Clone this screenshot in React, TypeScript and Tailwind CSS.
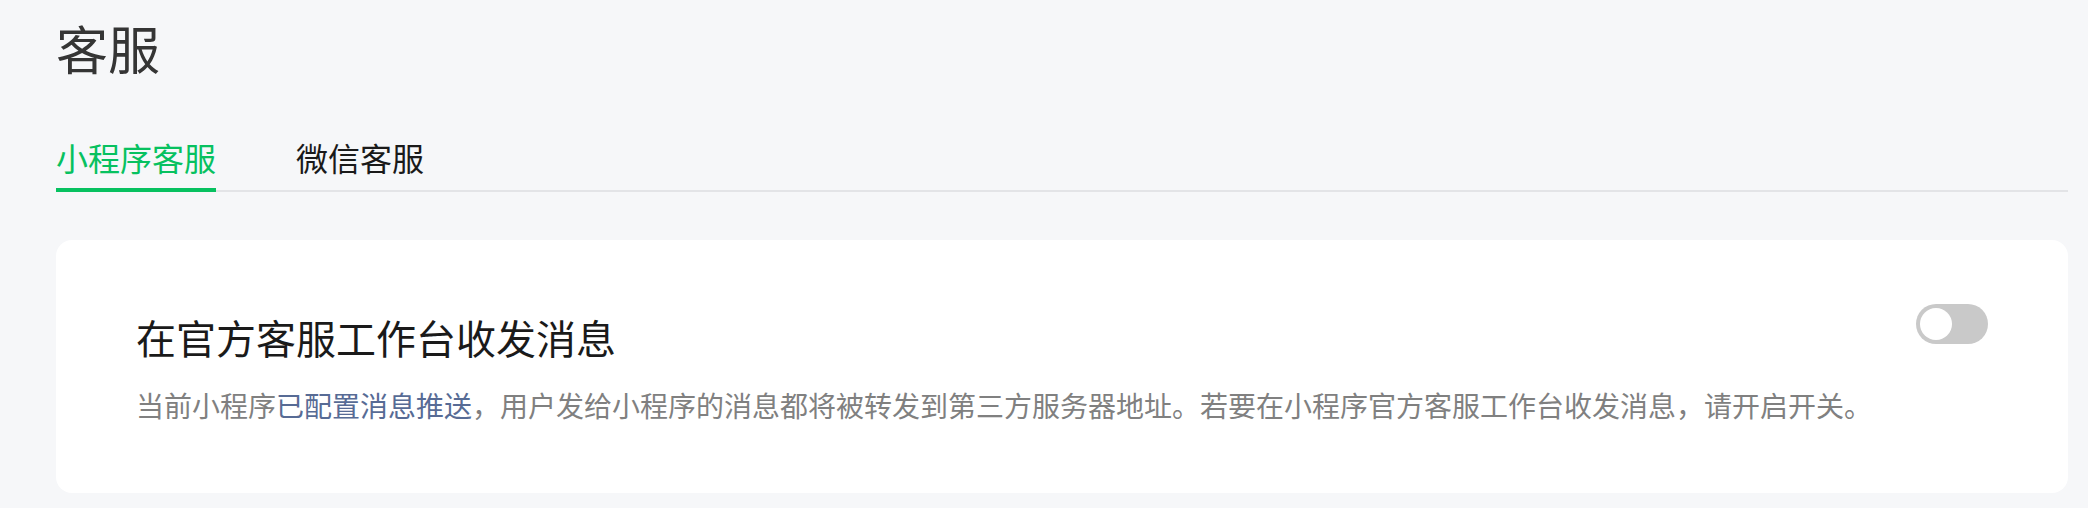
import React from "react";

export default function App() {
  const font = { fontFamily: '"Noto Sans CJK SC", "Noto Sans", sans-serif' };
  return (
    <div
      className="w-full min-h-[508px] bg-[#f6f7f9] pl-[56px] pr-[20px] pt-[16px]"
      style={font}
    >
      <h1 className="text-[52px] leading-[64px] text-[#353535] font-normal">客服</h1>

      <div className="mt-[55px] flex gap-[80px] border-b-2 border-[#e3e4e7]">
        <div className="relative pb-[11px]">
          <span className="block text-[32px] leading-[44px] text-[#07c160]">小程序客服</span>
          <div className="absolute left-0 right-0 bottom-[-2px] h-[4px] bg-[#07c160]" />
        </div>
        <div className="relative pb-[11px]">
          <span className="block text-[32px] leading-[44px] text-[#1a1a1a]">微信客服</span>
        </div>
      </div>

      <div className="mt-[48px] rounded-[16px] bg-white pl-[80px] pr-[80px] pt-[64px] pb-[68px]">
        <div className="flex items-start justify-between">
          <div className="mt-[5px] text-[40px] leading-[56px] text-[#1a1a1a]">
            在官方客服工作台收发消息
          </div>
          <button
            type="button"
            aria-label="toggle"
            className="flex h-[40px] w-[72px] items-center rounded-full bg-[#c9c9c9] p-[4px]"
          >
            <span className="block h-[32px] w-[32px] rounded-full bg-white" />
          </button>
        </div>
        <p className="mt-[20px] text-[28px] leading-[40px] text-[#808080]">
          当前小程序<span className="text-[#576b95]">已配置消息推送</span>
          ，用户发给小程序的消息都将被转发到第三方服务器地址。若要在小程序官方客服工作台收发消息，请开启开关。
        </p>
      </div>
    </div>
  );
}
